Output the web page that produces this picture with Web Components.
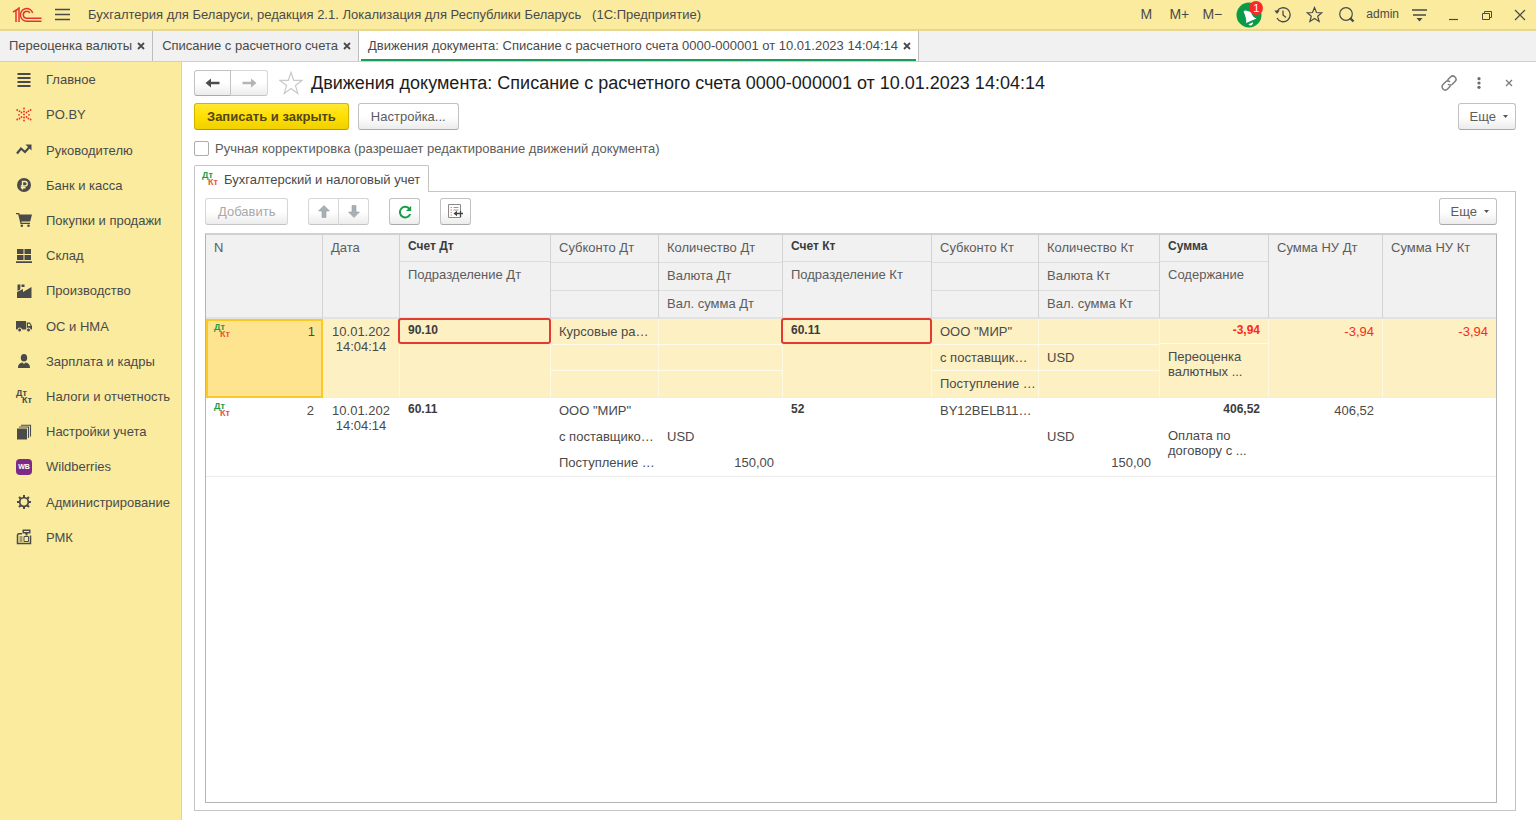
<!DOCTYPE html>
<html lang="ru">
<head>
<meta charset="utf-8">
<title>Движения документа</title>
<style>
  html, body { height: 100%; margin: 0; }
  body {
    font: 13px/15px "Liberation Sans", Arial, sans-serif;
    color: #4a4a4a;
    background: #fff;
    --brand: #faeb9e;
    --line: #c4c4c4;
    --ink: #4a4a4a;
  }
</style>
</head>
<body>
<app-window>
  <title-bar slot="title">Бухгалтерия для Беларуси, редакция 2.1. Локализация для Республики Беларусь &nbsp; (1С:Предприятие)</title-bar>

  <window-tabs slot="tabs">
    <window-tab>Переоценка валюты</window-tab>
    <window-tab>Списание с расчетного счета</window-tab>
    <window-tab active>Движения документа: Списание с расчетного счета 0000-000001 от 10.01.2023 14:04:14</window-tab>
  </window-tabs>

  <side-nav slot="nav">
    <nav-item icon="home">Главное</nav-item>
    <nav-item icon="poby">PO.BY</nav-item>
    <nav-item icon="trend">Руководителю</nav-item>
    <nav-item icon="bank">Банк и касса</nav-item>
    <nav-item icon="cart">Покупки и продажи</nav-item>
    <nav-item icon="stock">Склад</nav-item>
    <nav-item icon="factory">Производство</nav-item>
    <nav-item icon="truck">ОС и НМА</nav-item>
    <nav-item icon="person">Зарплата и кадры</nav-item>
    <nav-item icon="dtkt">Налоги и отчетность</nav-item>
    <nav-item icon="books">Настройки учета</nav-item>
    <nav-item icon="wb">Wildberries</nav-item>
    <nav-item icon="gear">Администрирование</nav-item>
    <nav-item icon="till">РМК</nav-item>
  </side-nav>

  <document-form heading="Движения документа: Списание с расчетного счета 0000-000001 от 10.01.2023 14:04:14">
    <ui-button slot="commands" kind="primary">Записать и закрыть</ui-button>
    <ui-button slot="commands">Настройка...</ui-button>
    <ui-button slot="more" kind="menu">Еще</ui-button>
    <tab-panel label="Бухгалтерский и налоговый учет">
      <table-toolbar></table-toolbar>
      <postings-table></postings-table>
    </tab-panel>
  </document-form>
</app-window>

<script>
const define = (name, html, init) => {
  const template = document.createElement('template');
  template.innerHTML = '<style>:host,*{box-sizing:border-box}button{font:inherit;color:inherit;cursor:pointer}:focus-visible{outline:2px solid #e0b000}</style>' + html;
  customElements.define(name, class extends HTMLElement {
    constructor() {
      super();
      this.attachShadow({ mode: 'open' }).append(template.content.cloneNode(true));
    }
    connectedCallback() {
      if (init && !this.ready) { this.ready = true; init(this, this.shadowRoot); }
    }
  });
};

/* ---------- icons ---------- */
const S = 'fill="none" stroke="currentColor"';
const ICONS = {
  logo: [30, 16, `<g fill="none" stroke="#e3342b" stroke-width="1.500"><path d="M1 5.200 4 3.200V15M4.500 3.200 7 1V15"/><path d="M20.700 6A6.300 6.300 0 1 0 15 14.200H29.500"/><path d="M17.800 6A3.500 3.500 0 1 0 15 11.300H29.500"/></g>`],
  burger: [15, 13, `<path ${S} stroke-width="1.400" d="M0 1.500H15M0 6.500H15M0 11.500H15"/>`],
  bell: [26, 26, `<circle cx="13" cy="13" r="12.500" fill="#0a9a48"/><path d="M7.500 9.500C8.500 8.500 9.500 8.300 10.500 8.700L15 10C16 14 18 15.500 20.500 16.500L10 21C11 18 9 13 7.500 9.500Z" fill="#fff"/><path d="M12.500 22.300 17 20.300A2.500 2.500 0 0 1 12.500 22.300z" fill="#fff"/>`],
  history: [17, 17, `<path ${S} stroke-width="1.300" d="M3 5.500A7 7 0 1 1 3 12M9 4.500V9l3 2.500"/><path fill="currentColor" d="M.3 4.500H5.700L3 8z"/>`],
  star: [17, 17, `<path ${S} stroke-width="1.200" d="M8.500 1.500 10.500 6.500 15.800 6.800 11.700 10.200 13.100 15.500 8.500 12.500 3.900 15.500 5.300 10.200 1.200 6.800 6.500 6.500z"/>`],
  bigstar: [24, 24, `<path fill="none" stroke="#c9c9c9" stroke-width="1.200" d="M12 1.500 14.700 9.300 23 9.400 16.400 14.400 18.800 22.400 12 17.600 5.200 22.400 7.600 14.400 1 9.400 9.300 9.300z"/>`],
  search: [17, 17, `<circle cx="8" cy="8" r="6.300" ${S} stroke-width="1.200"/><path ${S} stroke-width="2.400" d="M12 12l3.500 3.500"/>`],
  menu: [15, 14, `<path ${S} stroke-width="1.400" d="M0 2H15M1 7H14"/><path fill="currentColor" d="M4.500 10h6l-3 3.500z"/>`],
  minimize: [10, 12, `<path ${S} stroke-width="1.200" d="M0 10.500H9"/>`],
  restore: [10, 12, `<path ${S} d="M.5 4.500H7.500V10.500H.5zM2.500 4V2.500H9.500V8.500H8"/>`],
  close: [12, 12, `<path ${S} stroke-width="1.200" d="M1 1l10 10M11 1 1 11"/>`],
  tabclose: [8, 8, `<path ${S} stroke-width="1.800" d="M1 1l6 6M7 1 1 7"/>`],
  formclose: [8, 8, `<path stroke="#7c7c7c" stroke-width="1.300" d="M1 1l6 6M7 1 1 7"/>`],
  link: [16, 16, `<g fill="none" stroke="#7c7c7c" stroke-width="1.500" stroke-linecap="round"><path d="M7 4.500 9.500 2A3 3 0 0 1 14 6.500L11 9.500A3 3 0 0 1 7.500 9.500"/><path d="M9 11.500 6.500 14A3 3 0 0 1 2 9.500L5 6.500A3 3 0 0 1 8.500 6.500"/></g>`],
  dots: [4, 12, `<g fill="#6c6c6c"><circle cx="2" cy="1.700" r="1.600"/><circle cx="2" cy="6" r="1.600"/><circle cx="2" cy="10.300" r="1.600"/></g>`],
  left: [15, 10, `<path d="M.5 5 6 .5V3.800H14.500V6.200H6V9.500z" fill="#4c4c4c"/>`],
  right: [15, 10, `<path d="M14.500 5 9 .5V3.800H.5V6.200H9V9.500z" fill="#b4b4b4"/>`],
  up: [12, 13, `<path d="M6 .5 11.500 6H8V12.500H4V6H.5z" fill="#a9b0b3" stroke="#989fa3" stroke-width=".6"/>`],
  down: [12, 13, `<path d="M6 12.500 11.500 7H8V.5H4V7H.5z" fill="#a9b0b3" stroke="#989fa3" stroke-width=".6"/>`],
  refresh: [14, 14, `<path fill="none" stroke="#1a9c4b" stroke-width="2" d="M11.500 4A5.300 5.300 0 1 0 12.200 9"/><path d="M13.200.8V6H8z" fill="#1a9c4b"/>`],
  insert: [15, 15, `<path fill="#fff" stroke="#8a8a8a" d="M.5.5H12.500V13.500H.5z"/><path stroke="#e58b76" stroke-width="1.200" d="M2.500 3.500H4M2.500 6H4M2.500 8.500H4M2.500 11H4"/><path stroke="#999" d="M5.500 3.500H10.500M5.500 6H10.500"/><path stroke="#444" stroke-width="1.300" d="M7 9.500H15M12.500 7V13"/><path d="M5.500 9.500 9 6.700V12.300z" fill="#444"/>`],
  caret: [5, 3, `<path d="M0 0H5L2.500 3z" fill="#555"/>`],
  home: [16, 16, `<path ${S} stroke-width="2" d="M1.500 2H14.500M1.500 6H14.500M1.500 10H14.500M1.500 14H14.500"/>`],
  poby: [16, 16, `<g fill="#ea3323">${[[8,1.500],[8,4.500],[8,7.500],[8,10.500],[8,13.500],[5.500,5.500],[5.500,10],[3,7.800],[1.200,3],[1.200,12.500],[3.500,4.200],[3.500,11.500],[10.500,5.500],[10.500,10],[13,7.800],[14.600,3],[14.600,12.500],[12.400,4.200],[12.400,11.500]].map(p => `<circle cx="${p[0]}" cy="${p[1]}" r=".9"/>`).join('')}</g>`],
  trend: [16, 16, `<path ${S} stroke-width="2.200" d="M1 11.500 5 6.500 9 10 14 4.500"/><path fill="currentColor" d="M9.500 2.500H15.500V8.500z"/>`],
  bank: [16, 16, `<circle cx="8" cy="8" r="7" fill="currentColor"/><path fill="none" stroke="#faeb9e" stroke-width="1.400" d="M6.500 12.500V4.500H9A2.200 2.200 0 0 1 9 9H4.800M4.800 10.800H9.500"/>`],
  cart: [16, 16, `<path fill="currentColor" d="M0 1H3.200L3.700 2.500H16L14.200 9.500H5.300L5.600 10.800H14V12H4.500L2.200 2.300H0z"/><circle cx="5.800" cy="13.800" r="1.300" fill="currentColor"/><circle cx="12.500" cy="13.800" r="1.300" fill="currentColor"/>`],
  stock: [16, 16, `<path fill="currentColor" d="M1 1H7.500V6H1zM8.500 1H15V6H8.500zM1 7H7.500V12H1zM8.500 7H15V12H8.500zM0 13.200H16V15H0z"/>`],
  factory: [16, 16, `<path fill="currentColor" d="M1 15V9L7 6V9L15.500 4V15zM1.500 1.500H4.500L4.200 6.500 1.500 8zM5.500 1.500H8.500V4H5.500z"/>`],
  truck: [16, 16, `<path fill="currentColor" fill-rule="evenodd" d="M0 3H10V11.500H0zM10.700 4.500H14L16 8V11.500H10.700zM12 5.700V8H14.700L13.500 5.700z"/><circle cx="3.700" cy="12" r="2" fill="currentColor" stroke="#faeb9e"/><circle cx="12.500" cy="12" r="2" fill="currentColor" stroke="#faeb9e"/>`],
  person: [16, 16, `<ellipse cx="8" cy="4.800" rx="3.200" ry="3.800" fill="currentColor"/><path fill="currentColor" d="M2 15C2 11 4 10 6.500 9.500L8 11 9.500 9.500C12 10 14 11 14 15z"/>`],
  books: [16, 16, `<path fill="currentColor" d="M1 4.500H11V15.500H1z"/><path ${S} stroke-width="1.100" d="M3 3H12.500V14M5 1.200H14.500V12.500"/>`],
  gear: [16, 16, `<circle cx="8" cy="8" r="4.300" ${S} stroke-width="1.800"/><path ${S} stroke-width="2" d="M8 1V3.500M8 12.500V15M1 8H3.500M12.500 8H15M3 3 4.800 4.800M11.200 11.200 13 13M13 3 11.200 4.800M4.800 11.200 3 13"/>`],
  till: [16, 16, `<path ${S} stroke-width="1.500" d="M6 4.700H3Q1.500 4.700 1.500 6.200V14.500H14.500V6.500"/><path fill="currentColor" d="M6.500.5H14.500V4.500H11.500V6.500H9.500V4.500H6.500z"/><path stroke="#faeb9e" d="M8 2.500H13"/><path ${S} d="M3.500 8H6.500M3.500 10H6.500M3.500 12H6.500"/><path ${S} d="M8 7.500H12.500V12.500H8z"/>`]
};

define('ui-icon', `<style>:host{display:block;flex:none}svg{display:block}</style>`, (el, root) => {
  const [w, h, body] = ICONS[el.getAttribute('name')];
  root.innerHTML += `<svg width="${w}" height="${h}" viewBox="0 0 ${w} ${h}" aria-hidden="true">${body}</svg>`;
});

define('dtkt-mark', `<style>
  :host{display:grid;width:16px;flex:none;font-weight:bold;font-size:9px;line-height:7px;color:#1a9c4b;--kt:#e8553a}
  :host([mono]){color:#4a4a4a;--kt:#4a4a4a}
  span+span{text-align:right;color:var(--kt)}
</style><span>Дт</span><span>Кт</span>`);

/* ---------- frame ---------- */
define('app-window', `<style>
  :host{display:grid;grid-template:auto auto 1fr/182px minmax(0,1fr);min-height:100%}
  header,.tabs{grid-column:1/-1}
  main{display:grid;min-width:0}
</style>
<header><slot name="title"></slot></header>
<div class="tabs"><slot name="tabs"></slot></div>
<slot name="nav"></slot>
<main><slot></slot></main>`);

define('title-bar', `<style>
  :host{display:flex;align-items:center;height:31px;padding:0 4px 0 12px;background:var(--brand);border-bottom:2px solid #e6d890}
  h1{flex:1;margin:0 0 0 14px;font-size:13px;font-weight:normal;white-space:nowrap;overflow:hidden}
  button{display:grid;place-items:center;min-width:24px;height:28px;padding:0;border:0;background:none}
  .burger{margin-left:8px}
  .memory{display:flex;gap:9px;margin-right:12px;font-size:14px}
  .tools{display:flex;align-items:center;gap:8px}
  .alert{position:relative}
  .badge{position:absolute;left:13px;top:0;width:14px;height:14px;border-radius:50%;background:#fb2a2a;color:#fff;font-size:11px;line-height:14px}
  .user{font-size:12px;min-width:32px}
  .win{display:flex;gap:9px;margin-left:11px}
</style>
<ui-icon name="logo"></ui-icon>
<button class="burger" aria-label="Меню"><ui-icon name="burger"></ui-icon></button>
<h1><slot></slot></h1>
<div class="memory"><button>M</button><button>M+</button><button>M−</button></div>
<div class="tools">
  <button class="alert" aria-label="Оповещения"><ui-icon name="bell"></ui-icon><span class="badge">1</span></button>
  <button aria-label="История"><ui-icon name="history"></ui-icon></button>
  <button aria-label="Избранное"><ui-icon name="star"></ui-icon></button>
  <button aria-label="Поиск"><ui-icon name="search"></ui-icon></button>
  <button class="user">admin</button>
  <button aria-label="Сервис"><ui-icon name="menu"></ui-icon></button>
</div>
<div class="win">
  <button aria-label="Свернуть"><ui-icon name="minimize"></ui-icon></button>
  <button aria-label="Восстановить"><ui-icon name="restore"></ui-icon></button>
  <button aria-label="Закрыть"><ui-icon name="close"></ui-icon></button>
</div>`);

define('window-tabs', `<style>
  :host{display:flex;height:31px;background:#f1f1f1;border-bottom:1px solid #cfcfcf}
</style><slot></slot>`);

define('window-tab', `<style>
  :host{display:flex;align-items:center;padding:0 2px 0 9px;border-right:1px solid #bdbdbd;white-space:nowrap}
  :host([active]){background:#fff linear-gradient(#1a9c5a,#1a9c5a) 50% 100%/calc(100% - 4px) 2px no-repeat}
  button{display:grid;place-items:center;width:18px;height:20px;padding:0;border:0;background:none}
  span{padding-bottom:2px}
  button{padding-bottom:1px}
</style><span><slot></slot></span><button aria-label="Закрыть вкладку"><ui-icon name="tabclose"></ui-icon></button>`);

define('side-nav', `<style>
  :host{display:block;background:var(--brand);border-right:1px solid #e2d48c}
  nav{display:grid;grid-auto-rows:1fr;height:493px}
</style><nav><slot></slot></nav>`);

define('nav-item', `<style>
  :host{display:grid}
  a{display:flex;align-items:center;gap:14px;padding:0 16px;color:inherit;text-decoration:none;white-space:nowrap}
  .wb{display:grid;place-items:center;width:16px;height:16px;border-radius:4px;background:#7b2a86;color:#fff;font-size:7px;font-weight:bold}
</style><a href="#"><span class="icon"></span><slot></slot></a>`, (el, root) => {
  const icon = el.getAttribute('icon');
  root.querySelector('.icon').innerHTML =
    icon === 'dtkt' ? '<dtkt-mark mono></dtkt-mark>' :
    icon === 'wb' ? '<span class="wb">WB</span>' : `<ui-icon name="${icon}"></ui-icon>`;
});

/* ---------- controls ---------- */
define('ui-button', `<style>
  :host{display:inline-block}
  button{display:flex;align-items:center;justify-content:center;height:27px;padding:0 12px;border:1px solid #c2c2c2;border-bottom-color:#a9a9a9;border-radius:3px;background:linear-gradient(#fff 50%,#ececec);white-space:nowrap;color:#5c5c5c}
  :host([kind=primary]) button{border-color:#d2b400;border-bottom-color:#b89c00;background:linear-gradient(#ffe834,#ffdf00 50%,#f0d000);font-weight:bold;color:#524718}
  :host([kind=menu]) button{gap:7px;padding:0 7px 0 11px}
  :host([kind=icon]) button{width:31px;padding:0}
  :host([disabled]) button{color:#a8a8a8;border-color:#d6d6d6;border-bottom-color:#c4c4c4}
  :host([join=left]) button{border-radius:3px 0 0 3px}
  :host([join=right]) button{border-radius:0 3px 3px 0;border-left:0;width:30px}
  :host([wide]) button{width:37px;height:26px}
  .caret{display:none}
  :host([kind=menu]) .caret{display:block}
</style><button><slot></slot><ui-icon class="caret" name="caret"></ui-icon></button>`, (el, root) => {
  const button = root.querySelector('button');
  button.disabled = el.hasAttribute('disabled');
  if (el.title) button.setAttribute('aria-label', el.title);
});

define('document-form', `<style>
  :host{display:flex;flex-direction:column;padding:8px 20px 9px 12px;min-width:0}
  .row{display:flex;align-items:center}
  .head{height:26px}
  .pair{display:flex}
  .star{display:grid;padding:0;border:0;background:none;margin:0 8px 0 11px}
  h2{flex:1;margin:0;font-size:18px;line-height:22px;font-weight:normal;color:#1c1c1c;white-space:nowrap}
  .tools{display:flex;gap:6px;margin-right:-5px}
  .tools button{display:grid;place-items:center;width:24px;height:24px;padding:0;border:0;background:none}
  .commands{margin-top:7px;gap:9px}
  .grow{flex:1}
  label{display:flex;align-items:center;gap:6px;height:16px;margin:10px 0 9px;color:#5c5c5c}
  input{appearance:none;width:15px;height:15px;margin:0;border:1px solid #adadad;border-radius:2px;background:#fff}
  input:checked{background:#ffdf00}
</style>
<div class="row head">
  <div class="pair">
    <ui-button kind="icon" join="left" wide title="Назад"><ui-icon name="left"></ui-icon></ui-button>
    <ui-button kind="icon" join="right" wide title="Вперед" disabled><ui-icon name="right"></ui-icon></ui-button>
  </div>
  <button class="star" aria-label="В избранное"><ui-icon name="bigstar"></ui-icon></button>
  <h2></h2>
  <div class="tools">
    <button aria-label="Ссылка"><ui-icon name="link"></ui-icon></button>
    <button aria-label="Еще действия"><ui-icon name="dots"></ui-icon></button>
    <button aria-label="Закрыть"><ui-icon name="formclose"></ui-icon></button>
  </div>
</div>
<div class="row commands"><slot name="commands"></slot><span class="grow"></span><slot name="more"></slot></div>
<label><input type="checkbox">Ручная корректировка (разрешает редактирование движений документа)</label>
<slot></slot>`, (el, root) => { root.querySelector('h2').textContent = el.getAttribute('heading'); });

define('tab-panel', `<style>
  :host{display:flex;flex-direction:column;flex:1;min-width:0}
  .tab{z-index:1;align-self:flex-start;display:flex;align-items:center;gap:6px;height:27px;margin-bottom:-1px;padding:0 8px 0 7px;border:1px solid var(--line);border-bottom:0;border-radius:2px 2px 0 0;background:#fff;white-space:nowrap}
  .tab button{padding:0;border:0;background:none}
  .body{flex:1;display:flex;flex-direction:column;gap:8px;padding:6px 18px 7px 10px;border:1px solid var(--line)}
</style>
<div class="tab"><dtkt-mark></dtkt-mark><button></button></div>
<div class="body"><slot></slot></div>`, (el, root) => { root.querySelector('button').textContent = el.getAttribute('label'); });

define('table-toolbar', `<style>
  :host{display:flex;gap:20px}
  .pair{display:flex}
  .end{margin-left:auto}
</style>
<ui-button disabled>Добавить</ui-button>
<div class="pair">
  <ui-button kind="icon" join="left" disabled title="Вверх"><ui-icon name="up"></ui-icon></ui-button>
  <ui-button kind="icon" join="right" disabled title="Вниз"><ui-icon name="down"></ui-icon></ui-button>
</div>
<ui-button kind="icon" title="Обновить"><ui-icon name="refresh"></ui-icon></ui-button>
<ui-button kind="icon" title="Показать в списке"><ui-icon name="insert"></ui-icon></ui-button>
<ui-button class="end" kind="menu">Еще</ui-button>`);

/* ---------- postings ---------- */
const COLUMNS = [
  { w: 117, head: ['N'] }, { w: 77, head: ['Дата'] },
  { w: 151, head: ['*Счет Дт', 'Подразделение Дт'] },
  { w: 108, head: ['Субконто Дт', '', ''] },
  { w: 124, head: ['Количество Дт', 'Валюта Дт', 'Вал. сумма Дт'] },
  { w: 149, head: ['*Счет Кт', 'Подразделение Кт'] },
  { w: 107, head: ['Субконто Кт', '', ''] },
  { w: 121, head: ['Количество Кт', 'Валюта Кт', 'Вал. сумма Кт'] },
  { w: 109, head: ['*Сумма', 'Содержание'] },
  { w: 114, head: ['Сумма НУ Дт'] }, { w: 113, head: ['Сумма НУ Кт'] }
];
/* Prefixes: * bold, > right-aligned, ! negative, # framed in red, @ posting mark. */
const ROWS = [
  [['@1'], ['10.01.202<br>14:04:14'], ['#*90.10', ''], ['Курсовые ра…', '', ''], ['', '', ''], ['#*60.11', ''],
   ['ООО "МИР"', 'с поставщик…', 'Поступление …'], ['', 'USD', ''], ['!>*-3,94', 'Переоценка<br>валютных ...'], ['!>-3,94'], ['!>-3,94']],
  [['@2'], ['10.01.202<br>14:04:14'], ['*60.11', ''], ['ООО "МИР"', 'с поставщико…', 'Поступление …'], ['', 'USD', '>150,00'], ['*52', ''],
   ['BY12BELB11…', '', ''], ['', 'USD', '>150,00'], ['>*406,52', 'Оплата по<br>договору с ...'], ['>406,52'], ['']]
];
const FLAGS = { '*': 'bold', '>': 'num', '!': 'neg', '#': 'framed', '@': 'mark' };
const part = text => {
  const classes = ['part'];
  while (FLAGS[text[0]]) { classes.push(FLAGS[text[0]]); text = text.slice(1); }
  const body = classes.includes('mark') ? `<dtkt-mark></dtkt-mark><span>${text}</span>` : text;
  return `<div class="${classes.join(' ')}">${body}</div>`;
};
const cell = (tag, parts, i) =>
  `<${tag}><div class="stack s${parts.length}${i === 1 ? ' date' : ''}">${parts.map(part).join('')}</div></${tag}>`;

define('postings-table', `<style>
  :host{display:block;flex:1;border:1px solid #b4b4b4;border-top:2px solid #d0d0d0;background:#fff}
  table{width:100%;table-layout:fixed;border-collapse:separate;border-spacing:0}
  th,td{padding:0;font-weight:normal;text-align:left;vertical-align:top}
  .stack{display:grid;--edge:transparent}
  thead .stack{height:84px;background:#f1f1f1;border-right:1px solid #d2d2d2;border-bottom:2px solid #e2e2e2;--edge:#dcdcdc;color:#5c5c5c}
  th:last-child .stack,tr td:last-child .stack{border-right:0}
  tbody .stack{height:79px;border-bottom:1px solid #ececec;border-right:1px solid transparent}
  tbody tr:first-child .stack{background:#fdf0c3;border-right-color:#fff8e0;--edge:#fffbea}
  thead .s3{grid-template-rows:28px 28px 1fr}
  thead .s2{grid-template-rows:27px 1fr}
  tbody .s3{grid-template-rows:26px 26px 1fr}
  tbody .s2{grid-template-rows:25px 1fr}
  .part{padding:5px 8px 0;border-bottom:1px solid var(--edge);white-space:nowrap;overflow:hidden}
  .part:last-child{border-bottom:0}
  .bold{font-weight:bold;font-size:12px;padding-top:4px}
  .bold:not(.neg){color:#3c3c3c}
  .num{text-align:right}
  .neg{color:#fb2a1c}
  .date .part{text-align:center;padding:5px 0 0}
  thead .date .part{text-align:left;padding-left:8px}
  .mark{display:flex;justify-content:space-between;align-items:flex-start}
  tbody tr:first-child td:first-child .stack{background:#ffe48f;border:2px solid #fbc926}
  tbody tr:first-child td:first-child .part{padding:3px 6px 0}
  .framed{margin:-1px -1px 0 -2px;padding:3px 8px 0;border:2px solid #e23b32!important;border-radius:3px;background:#fdf0c3;z-index:1}
</style>
<table>
  <colgroup>${COLUMNS.map(c => `<col style="width:${c.w}px">`).join('')}</colgroup>
  <thead><tr>${COLUMNS.map(c => cell('th', c.head)).join('')}</tr></thead>
  <tbody>${ROWS.map(r => `<tr>${r.map((p, i) => cell('td', p, i)).join('')}</tr>`).join('')}</tbody>
</table>`);
</script>
</body>
</html>
